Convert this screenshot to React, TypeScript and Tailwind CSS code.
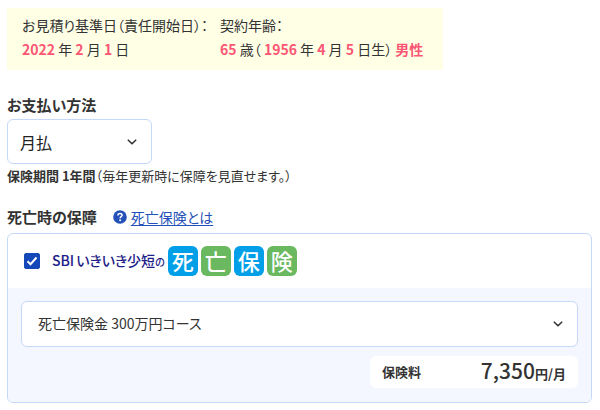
import { useState } from "react";

const LOGO_TILES = [
  { char: "死", color: "bg-[#009fe8]" },
  { char: "亡", color: "bg-[#6ab860]" },
  { char: "保", color: "bg-[#009fe8]" },
  { char: "険", color: "bg-[#6ab860]" },
];

function IconChevron() {
  return (
    <svg className="h-2 w-3" fill="none" stroke="#333333" strokeWidth={1.6} viewBox="0 0 12 8" aria-hidden>
      <path strokeLinecap="round" strokeLinejoin="round" d="M2.3 2.2L6 5.8l3.7-3.6" />
    </svg>
  );
}

function IconHelp() {
  return (
    <svg className="h-3.5 w-3.5" viewBox="0 0 14 14" aria-hidden>
      <circle cx="7" cy="7" r="6.8" fill="#2450b8" />
      <path d="M4.9 5.4C4.9 4.1 5.8 3.4 7 3.4s2.1.7 2.1 1.8c0 1.5-2 1.5-2 3" fill="none" stroke="#fff" strokeWidth={1.5} />
      <circle cx="7.1" cy="10.3" r="1" fill="#fff" />
    </svg>
  );
}

function Num({ children }: { children: string }) {
  return <span className="font-bold text-[#fb5674]">{children}</span>;
}

export default function App() {
  const [checked, setChecked] = useState(true);

  return (
    <main className="bg-white pt-2 pr-2 pb-1 pl-[7px] font-['Noto_Sans_CJK_JP','Noto_Sans',sans-serif] text-[#333333] [font-feature-settings:'palt']">
      <dl className="mb-[23px] flex w-fit gap-3 bg-[#ffffe6] pt-[5px] pr-5 pb-[9px] pl-[15px] text-[14px] leading-6 whitespace-nowrap">
        <div>
          <dt>お見積り基準日（責任開始日）：</dt>
          <dd>
            <Num>2022</Num> 年 <Num>2</Num> 月 <Num>1</Num> 日
          </dd>
        </div>
        <div>
          <dt>契約年齢：</dt>
          <dd>
            <Num>65</Num> 歳（ <Num>1956</Num> 年 <Num>4</Num> 月 <Num>5</Num> 日生） <Num>男性</Num>
          </dd>
        </div>
      </dl>

      <section className="mb-[17px]">
        <label htmlFor="payment" className="mb-0.5 block text-[15px] leading-6 font-bold">
          お支払い方法
        </label>
        <div className="relative w-[145px]">
          <select
            id="payment"
            className="block h-[45px] w-full appearance-none rounded-md border border-[#c5d8fa] bg-white px-3 text-[16px] text-[#222222]"
          >
            <option>月払</option>
            <option>年払</option>
          </select>
          <span className="pointer-events-none absolute inset-y-0 right-3.5 flex items-center">
            <IconChevron />
          </span>
        </div>
        <p className="text-[13px] leading-6">
          <strong>保険期間 1年間</strong>（毎年更新時に保障を見直せます。）
        </p>
      </section>

      <section>
        <div className="mb-1 flex items-center gap-4">
          <h2 className="text-[15px] leading-6 font-bold">死亡時の保障</h2>
          <a href="#about" className="flex items-center gap-1 text-[14px] leading-5 text-[#2450b8]">
            <IconHelp />
            <span className="underline underline-offset-2">死亡保険とは</span>
          </a>
        </div>

        <div className="overflow-hidden rounded-md border border-[#c5d8fa]">
          <label className="flex h-[54px] items-center px-4">
            <span className="relative mr-3 h-4 w-4">
              <input
                type="checkbox"
                checked={checked}
                onChange={(e) => setChecked(e.target.checked)}
                className="peer block h-4 w-4 appearance-none rounded-xs border border-[#1548b8] bg-white checked:bg-[#1548b8]"
              />
              <svg
                className="pointer-events-none absolute inset-0 m-auto hidden h-3 w-3 text-white peer-checked:block"
                fill="none"
                stroke="currentColor"
                strokeWidth={2}
                viewBox="0 0 12 12"
                aria-hidden
              >
                <path d="M1.5 6.2l3 3 6-6.7" />
              </svg>
            </span>
            <span className="flex items-baseline pb-0.5 text-[14px] font-medium whitespace-nowrap text-[#1d2088]">
              <span className="mr-0.5">SBI</span>
              <span>いきいき少短</span>
              <span className="text-[10px]">の</span>
            </span>
            <span className="ml-[3px] flex gap-[3px]">
              {LOGO_TILES.map((tile) => (
                <span
                  key={tile.char}
                  className={`flex h-[30px] w-[30px] items-center justify-center rounded-md pb-0.5 text-[22px] leading-none font-medium text-white ${tile.color}`}
                >
                  {tile.char}
                </span>
              ))}
            </span>
          </label>

          <div className="bg-[#f4f7ff] px-[13px] pt-[13px] pb-3.5">
            <div className="relative mb-[9px]">
              <select
                aria-label="死亡保険金コース"
                className="block h-[46px] w-full appearance-none rounded-md border border-[#c5d8fa] bg-white px-4 pb-0.5 text-[14px]"
              >
                <option>死亡保険金 300万円コース</option>
              </select>
              <span className="pointer-events-none absolute inset-y-0 right-3.5 flex items-center">
                <IconChevron />
              </span>
            </div>
            <div className="ml-auto flex h-8 w-52 items-center justify-between rounded-md bg-white px-3 text-[13px] font-bold">
              <span>保険料</span>
              <span className="leading-8 whitespace-nowrap">
                <span className="text-[21px] font-medium">7,350</span>円/月
              </span>
            </div>
          </div>
        </div>
      </section>
    </main>
  );
}
